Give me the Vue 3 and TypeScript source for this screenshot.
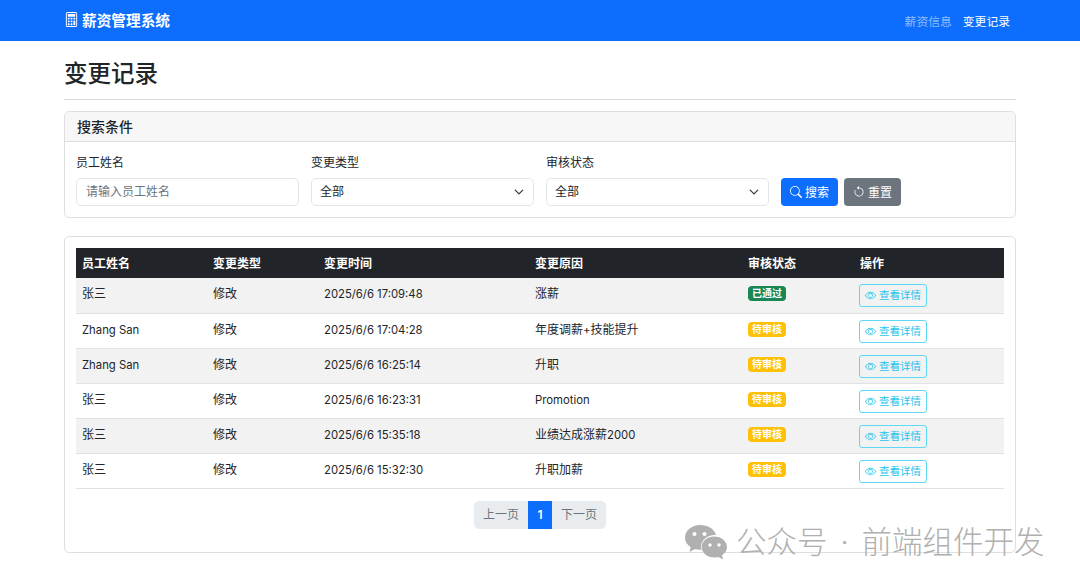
<script setup lang="ts">
interface LogRow {
  name: string
  type: string
  time: string
  reason: string
  approved: boolean
}

const rows: LogRow[] = [
  { name: '张三', type: '修改', time: '2025/6/6 17:09:48', reason: '涨薪', approved: true },
  { name: 'Zhang San', type: '修改', time: '2025/6/6 17:04:28', reason: '年度调薪+技能提升', approved: false },
  { name: 'Zhang San', type: '修改', time: '2025/6/6 16:25:14', reason: '升职', approved: false },
  { name: '张三', type: '修改', time: '2025/6/6 16:23:31', reason: 'Promotion', approved: false },
  { name: '张三', type: '修改', time: '2025/6/6 15:35:18', reason: '业绩达成涨薪2000', approved: false },
  { name: '张三', type: '修改', time: '2025/6/6 15:32:30', reason: '升职加薪', approved: false }
]

const columns = ['员工姓名', '变更类型', '变更时间', '变更原因', '审核状态', '操作']

// latin runs sit a little smaller than the CJK text next to them
const runs = (text: string) => text.split(/([ -~]+)/).filter(Boolean)
const isLatin = (run: string) => /^[ -~]/.test(run)
</script>

<template>
  <div class="page">
    <nav class="navbar">
      <a class="brand">
        <svg class="brand__icon" viewBox="0 0 16 16" fill="currentColor">
          <path d="M12 1a1 1 0 0 1 1 1v12a1 1 0 0 1-1 1H4a1 1 0 0 1-1-1V2a1 1 0 0 1 1-1h8zM4 0a2 2 0 0 0-2 2v12a2 2 0 0 0 2 2h8a2 2 0 0 0 2-2V2a2 2 0 0 0-2-2H4z"/>
          <path d="M4 2.5a.5.5 0 0 1 .5-.5h7a.5.5 0 0 1 .5.5v2a.5.5 0 0 1-.5.5h-7a.5.5 0 0 1-.5-.5v-2zm0 4a.5.5 0 0 1 .5-.5h1a.5.5 0 0 1 .5.5v1a.5.5 0 0 1-.5.5h-1a.5.5 0 0 1-.5-.5v-1zm0 3a.5.5 0 0 1 .5-.5h1a.5.5 0 0 1 .5.5v1a.5.5 0 0 1-.5.5h-1a.5.5 0 0 1-.5-.5v-1zm0 3a.5.5 0 0 1 .5-.5h1a.5.5 0 0 1 .5.5v1a.5.5 0 0 1-.5.5h-1a.5.5 0 0 1-.5-.5v-1zm3-6a.5.5 0 0 1 .5-.5h1a.5.5 0 0 1 .5.5v1a.5.5 0 0 1-.5.5h-1a.5.5 0 0 1-.5-.5v-1zm0 3a.5.5 0 0 1 .5-.5h1a.5.5 0 0 1 .5.5v1a.5.5 0 0 1-.5.5h-1a.5.5 0 0 1-.5-.5v-1zm0 3a.5.5 0 0 1 .5-.5h1a.5.5 0 0 1 .5.5v1a.5.5 0 0 1-.5.5h-1a.5.5 0 0 1-.5-.5v-1zm3-6a.5.5 0 0 1 .5-.5h1a.5.5 0 0 1 .5.5v1a.5.5 0 0 1-.5.5h-1a.5.5 0 0 1-.5-.5v-1zm0 3a.5.5 0 0 1 .5-.5h1a.5.5 0 0 1 .5.5v4a.5.5 0 0 1-.5.5h-1a.5.5 0 0 1-.5-.5v-4z"/>
        </svg>
        <span>薪资管理系统</span>
      </a>
      <div class="nav-links">
        <a class="nav-link">薪资信息</a>
        <a class="nav-link nav-link--active">变更记录</a>
      </div>
    </nav>

    <main class="container">
      <h1 class="title">变更记录</h1>
      <hr class="divider" />

      <section class="card search">
        <header class="card__header">搜索条件</header>
        <div class="search__body">
          <div class="field">
            <label>员工姓名</label>
            <input class="control control--input" placeholder="请输入员工姓名" />
          </div>
          <div class="field">
            <label>变更类型</label>
            <div class="control control--select">
              <span>全部</span>
              <svg viewBox="0 0 16 16" fill="none" stroke="#343a40" stroke-width="2" stroke-linecap="round" stroke-linejoin="round"><path d="m2 5 6 6 6-6"/></svg>
            </div>
          </div>
          <div class="field">
            <label>审核状态</label>
            <div class="control control--select">
              <span>全部</span>
              <svg viewBox="0 0 16 16" fill="none" stroke="#343a40" stroke-width="2" stroke-linecap="round" stroke-linejoin="round"><path d="m2 5 6 6 6-6"/></svg>
            </div>
          </div>
          <div class="actions">
            <button class="btn btn--primary">
              <svg viewBox="0 0 16 16" fill="currentColor"><path d="M11.742 10.344a6.5 6.5 0 1 0-1.397 1.398h-.001c.03.04.062.078.098.115l3.85 3.85a1 1 0 0 0 1.415-1.414l-3.85-3.85a1.007 1.007 0 0 0-.115-.1zM12 6.5a5.5 5.5 0 1 1-11 0 5.5 5.5 0 0 1 11 0z"/></svg>
              <span>搜索</span>
            </button>
            <button class="btn btn--secondary">
              <svg viewBox="0 0 16 16" fill="currentColor"><path fill-rule="evenodd" d="M8 3a5 5 0 1 1-4.546 2.914.5.5 0 0 0-.908-.417A6 6 0 1 0 8 2v1z"/><path d="M8 4.466V.534a.25.25 0 0 0-.41-.192L5.23 2.308a.25.25 0 0 0 0 .384l2.36 1.966A.25.25 0 0 0 8 4.466z"/></svg>
              <span>重置</span>
            </button>
          </div>
        </div>
      </section>

      <section class="card records">
        <table class="table">
          <colgroup>
            <col style="width: 131px" />
            <col style="width: 111px" />
            <col style="width: 211px" />
            <col style="width: 213px" />
            <col style="width: 112px" />
            <col />
          </colgroup>
          <thead>
            <tr>
              <th v-for="col in columns" :key="col">{{ col }}</th>
            </tr>
          </thead>
          <tbody>
            <tr v-for="(row, i) in rows" :key="i">
              <td v-for="text in [row.name, row.type, row.time, row.reason]" :key="text">
                <span v-for="run in runs(text)" :key="run" :class="{ latin: isLatin(run) }">{{ run }}</span>
              </td>
              <td class="cell-tight">
                <span class="badge" :class="row.approved ? 'badge--success' : 'badge--warning'">
                  {{ row.approved ? '已通过' : '待审核' }}
                </span>
              </td>
              <td class="cell-tight">
                <button class="detail">
                  <svg viewBox="0 0 16 16" fill="currentColor"><path d="M16 8s-3-5.5-8-5.5S0 8 0 8s3 5.5 8 5.5S16 8 16 8zM1.173 8a13.133 13.133 0 0 1 1.66-2.043C4.12 4.668 5.88 3.5 8 3.5c2.12 0 3.879 1.168 5.168 2.457A13.133 13.133 0 0 1 14.828 8c-.058.087-.122.183-.195.288-.335.48-.83 1.12-1.465 1.755C11.879 11.332 10.119 12.5 8 12.5c-2.12 0-3.879-1.168-5.168-2.457A13.134 13.134 0 0 1 1.172 8z"/><path d="M8 5.5a2.5 2.5 0 1 0 0 5 2.5 2.5 0 0 0 0-5zM4.5 8a3.5 3.5 0 1 1 7 0 3.5 3.5 0 0 1-7 0z"/></svg>
                  <span>查看详情</span>
                </button>
              </td>
            </tr>
          </tbody>
        </table>
        <div class="pager">
          <span class="pager__item">上一页</span>
          <span class="pager__item pager__item--current">1</span>
          <span class="pager__item">下一页</span>
        </div>
      </section>
    </main>

    <div class="watermark">
      <svg class="watermark__icon" viewBox="0 0 44 36">
        <path fill="#b0b0b0" d="M16 1C7.7 1 1 6.6 1 13.5c0 4 2.2 7.4 5.7 9.7L5.5 28l5.4-3c1.6.5 3.3.8 5.1.8.5 0 1 0 1.5-.1-.3-1-.5-2-.5-3.1 0-6.5 6.1-11.7 13.7-11.7.4 0 .9 0 1.3.1C30.5 5 23.9 1 16 1z"/>
        <circle cx="10.5" cy="10" r="2" fill="#fff"/>
        <circle cx="20.5" cy="10" r="2" fill="#fff"/>
        <path fill="#b0b0b0" d="M43 23c0-5.8-5.7-10.5-12.7-10.5S17.6 17.2 17.6 23s5.7 10.5 12.7 10.5c1.5 0 2.9-.2 4.2-.6l4.5 2.600-1-4.200C41 29.300 43 26.300 43 23z"/>
        <circle cx="26" cy="21" r="1.7" fill="#fff"/>
        <circle cx="35" cy="21" r="1.7" fill="#fff"/>
      </svg>
      <span class="watermark__text">公众号<i class="watermark__dot">·</i>前端组件开发</span>
    </div>
  </div>
</template>

<style scoped>
.page {
  position: relative;
  width: 1080px;
  height: 586px;
  overflow: hidden;
  background: #fff;
  color: #212529;
  font-family: Inter, "Noto Sans CJK SC", sans-serif;
  font-size: 12px;
}

.navbar {
  display: flex;
  align-items: center;
  justify-content: space-between;
  height: 41px;
  padding: 0 70px 0 64px;
  background: #0d6efd;
}

.brand {
  display: flex;
  align-items: center;
  gap: 3px;
  margin-top: -2px;
  color: #fff;
  font-size: 14.67px;
  font-weight: 700;
}

.brand__icon {
  width: 15px;
  height: 15px;
}

.nav-links {
  display: flex;
  gap: 11px;
}

.nav-link {
  color: rgba(255, 255, 255, 0.55);
  font-size: 11.8px;
}

.nav-link--active {
  color: #fff;
}

.container {
  padding: 0 64px;
}

.title {
  margin: 0;
  padding-top: 16px;
  font-size: 23.5px;
  line-height: 33px;
  font-weight: 500;
}

.divider {
  height: 1px;
  margin: 9px 0 11px;
  border: 0;
  background: #d8d8d8;
}

.card {
  border: 1px solid #dfdfdf;
  border-radius: 5px;
}

.card__header {
  height: 29px;
  padding: 0 12px;
  background: #f7f7f7;
  border-bottom: 1px solid #dfdfdf;
  border-radius: 4px 4px 0 0;
  font-size: 14px;
  font-weight: 500;
  line-height: 30px;
}

.search__body {
  display: flex;
  align-items: flex-end;
  gap: 12px;
  padding: 12px 11px 11px;
}

.field {
  display: flex;
  flex-direction: column;
  gap: 7px;
  width: 223px;
}

.field label {
  line-height: 17px;
}

.control {
  box-sizing: border-box;
  width: 100%;
  height: 28px;
  padding: 0 9px;
  border: 1px solid #e2e5e9;
  border-radius: 5px;
  background: #fff;
  color: #212529;
  font: inherit;
  line-height: 26px;
  outline: none;
}

.control--input {
  padding-bottom: 2px;
}

.control::placeholder {
  color: #6c757d;
}

.control--select {
  display: flex;
  align-items: center;
  justify-content: space-between;
  padding-left: 8px;
}

.control--select svg {
  width: 10px;
  height: 10px;
}

.actions {
  display: flex;
  gap: 6px;
}

.btn {
  display: flex;
  align-items: center;
  justify-content: center;
  gap: 3px;
  width: 57px;
  height: 28px;
  padding: 0 0 1px;
  border: 0;
  border-radius: 4px;
  color: #fff;
  font: inherit;
}

.btn svg {
  width: 12px;
  height: 12px;
}

.btn--primary {
  background: #0d6efd;
}

.btn--secondary {
  background: #6c757d;
}

.records {
  margin-top: 18px;
  padding: 11px 11px 23px;
}

.table {
  width: 928px;
  table-layout: fixed;
  border-collapse: collapse;
}

th {
  box-sizing: border-box;
  height: 30px;
  padding: 0 6px 2px;
  background: #212529;
  color: #fff;
  font-weight: 700;
  text-align: left;
}

td {
  height: 35.17px;
  box-sizing: border-box;
  padding: 7px 6px 0;
  border-bottom: 1px solid #dee2e6;
  line-height: 17px;
  vertical-align: top;
}

td.cell-tight {
  padding-top: 6px;
}

tbody tr:nth-child(odd) td {
  background: #f2f2f2;
}

.latin {
  font-size: 11.3px;
}

.badge {
  display: block;
  width: 38px;
  height: 15px;
  margin-top: 2px;
  border-radius: 4px;
  color: #fff;
  font-size: 10px;
  font-weight: 700;
  line-height: 15px;
  text-align: center;
}

.badge--success {
  background: #198754;
}

.badge--warning {
  background: #ffc107;
}

.detail {
  display: flex;
  align-items: center;
  justify-content: center;
  gap: 3px;
  box-sizing: border-box;
  width: 68px;
  height: 23px;
  margin-left: -1px;
  padding: 0;
  border: 1px solid #5dd8f5;
  border-radius: 3px;
  background: transparent;
  color: #1fc4ee;
  font: inherit;
  font-size: 10.5px;
}

.detail svg {
  width: 11px;
  height: 11px;
}

.pager {
  display: flex;
  justify-content: center;
  margin-top: 12px;
  line-height: 28px;
}

.pager__item {
  padding: 0 9px;
  background: #e9ecef;
  color: #6c757d;
}

.pager__item:first-child {
  border-radius: 5px 0 0 5px;
}

.pager__item:last-child {
  border-radius: 0 5px 5px 0;
}

.pager__item--current {
  width: 6px;
  background: #0d6efd;
  color: #fff;
  font-weight: 600;
  text-align: center;
}

.watermark {
  position: absolute;
  left: 684px;
  top: 524px;
  display: flex;
  align-items: center;
  gap: 8px;
  color: #b0b0b0;
  font-size: 30.5px;
  font-weight: 300;
  line-height: 36px;
  white-space: nowrap;
}

.watermark__icon {
  width: 44px;
  height: 36px;
}

.watermark__dot {
  display: inline-block;
  width: 34px;
  font-style: normal;
  text-align: center;
}
</style>
